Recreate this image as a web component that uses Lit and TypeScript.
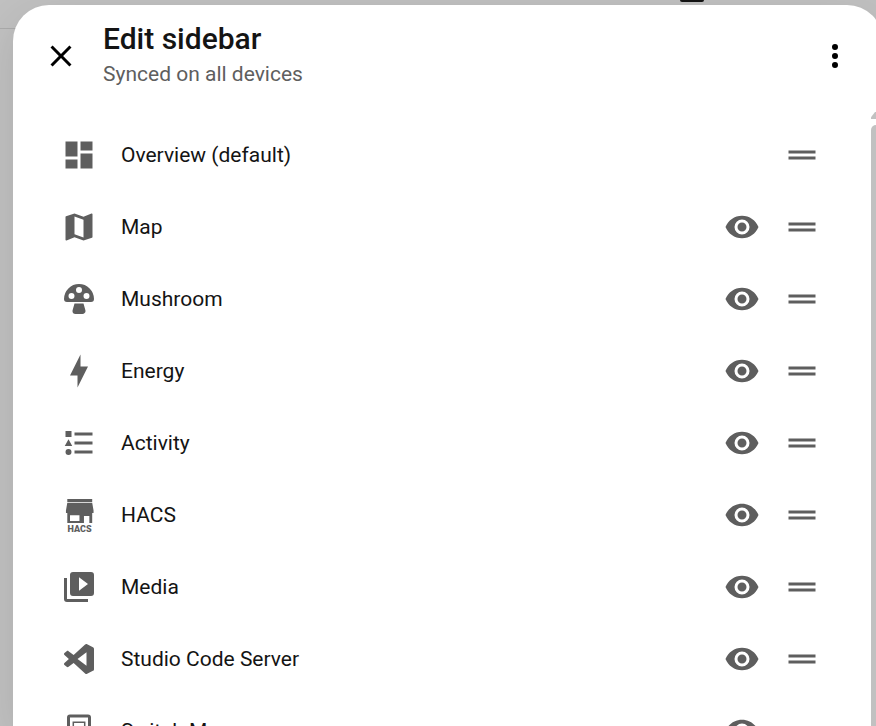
import { LitElement, html, svg, css, nothing } from "lit";
import { customElement, property, state } from "lit/decorators.js";

const paths: Record<string, string> = {
  close:
    "M19,6.41L17.59,5L12,10.59L6.41,5L5,6.41L10.59,12L5,17.59L6.41,19L12,13.41L17.59,19L19,17.59L13.41,12L19,6.41Z",
  dots:
    "M12,16A2,2 0 0,1 14,18A2,2 0 0,1 12,20A2,2 0 0,1 10,18A2,2 0 0,1 12,16M12,10A2,2 0 0,1 14,12A2,2 0 0,1 12,14A2,2 0 0,1 10,12A2,2 0 0,1 12,10M12,4A2,2 0 0,1 14,6A2,2 0 0,1 12,8A2,2 0 0,1 10,6A2,2 0 0,1 12,4Z",
  eye:
    "M12,9A3,3 0 0,0 9,12A3,3 0 0,0 12,15A3,3 0 0,0 15,12A3,3 0 0,0 12,9M12,17A5,5 0 0,1 7,12A5,5 0 0,1 12,7A5,5 0 0,1 17,12A5,5 0 0,1 12,17M12,4.5C7,4.5 2.73,7.61 1,12C2.73,16.39 7,19.5 12,19.5C17,19.5 21.27,16.39 23,12C21.27,7.61 17,4.5 12,4.5Z",
  drag: "M3,15V13H21V15H3M3,11V9H21V11H3Z",
  dashboard: "M13,3V9H21V3M13,21H21V11H13M3,21H11V15H3M3,13H11V3H3V13Z",
  map:
    "M15,19L9,16.89V5L15,7.11M20.5,3C20.44,3 20.39,3 20.34,3L15,5.1L9,3L3.36,4.9C3.15,4.97 3,5.15 3,5.38V20.5A0.5,0.5 0 0,0 3.5,21C3.55,21 3.61,21 3.66,20.97L9,18.9L15,21L20.64,19.1C20.85,19 21,18.85 21,18.62V3.5A0.5,0.5 0 0,0 20.5,3Z",
  mushroom:
    "M12,2A10,10 0 0,0 2,12A2,2 0 0,0 4,14H20A2,2 0 0,0 22,12A10,10 0 0,0 12,2M12,8A2,2 0 0,1 10,6A2,2 0 0,1 12,4A2,2 0 0,1 14,6A2,2 0 0,1 12,8M7,12A2,2 0 0,1 5,10A2,2 0 0,1 7,8A2,2 0 0,1 9,10A2,2 0 0,1 7,12M17,12A2,2 0 0,1 15,10A2,2 0 0,1 17,8A2,2 0 0,1 19,10A2,2 0 0,1 17,12M15,15L16.27,19.45L16.35,20C16.35,21.1 15.45,22 14.35,22H9.65A2,2 0 0,1 7.65,20L7.73,19.45L9,15H15Z",
  energy: "M11,15H6L13,1V9H18L11,23V15Z",
  activity:
    "M5,9.5L7.5,14H2.5L5,9.5M3,4H7V8H3V4M5,20A2,2 0 0,0 7,18A2,2 0 0,0 5,16A2,2 0 0,0 3,18A2,2 0 0,0 5,20M9,5V7H21V5H9M9,19H21V17H9V19M9,11V13H21V11H9Z",
  hacs:
    "M4.2,1.3H20.8V3.3H4.2ZM4.2,3.9H20.8L21.7,9V10.6H3.3V9ZM4.2,10.6H20.8V17.3H18.9V12.7H15.3V17.3H4.2ZM6,12.1V16H12.3V12.1Z",
  media:
    "M4,6H2V20A2,2 0 0,0 4,22H18V20H4V6M20,2H8A2,2 0 0,0 6,4V16A2,2 0 0,0 8,18H20A2,2 0 0,0 22,16V4A2,2 0 0,0 20,2M12,14.5V5.5L18,10L12,14.5Z",
  code:
    "M21.29,4.1L17.42,2.13C16.97,1.91 16.43,2 16.07,2.35L8.42,9.36L5.03,6.76C4.68,6.5 4.1,6.52 3.78,6.81L2.3,8.06C1.91,8.41 1.91,8.91 2.3,9.27L5.25,12L2.3,14.73C1.91,15.09 1.91,15.59 2.3,15.94L3.78,17.19C4.1,17.48 4.68,17.5 5.03,17.24L8.42,14.64L16.07,21.65C16.43,22 16.97,22.09 17.42,21.87L21.29,19.9C21.72,19.7 22,19.27 22,18.79V5.21C22,4.73 21.72,4.3 21.29,4.1M17,16.54L11.03,12L17,7.46V16.54Z",
  switch:
    "M6,1H18A2,2 0 0,1 20,3V21A2,2 0 0,1 18,23H6A2,2 0 0,1 4,21V3A2,2 0 0,1 6,1M6,3V21H18V3ZM7.7,5.6H16.3V18.4H7.7ZM8.7,6.6V17.4H15.3V6.6Z",
};

const icon = (name: string) => html`
  <svg class="icon" viewBox="0 0 24 24" aria-hidden="true">
    <path fill-rule="evenodd" d=${paths[name]}></path>
    ${name === "hacs"
      ? svg`<text class="mark" x="12.4" y="23.4" text-anchor="middle">HACS</text>`
      : nothing}
  </svg>
`;

const iconStyles = css`
  .icon {
    display: block;
    width: 36px;
    height: 36px;
    flex: none;
    fill: currentColor;
  }
  .mark {
    font: 900 6px Roboto, sans-serif;
  }
  button {
    display: grid;
    place-items: center;
    flex: none;
    padding: 0;
    border: 0;
    border-radius: 50%;
    background: none;
    color: inherit;
    cursor: pointer;
  }
`;

@customElement("sidebar-item")
class SidebarItem extends LitElement {
  @property() label = "";
  @property() glyph = "";
  @property({ type: Boolean }) fixed = false;

  static styles = [
    iconStyles,
    css`
      :host {
        display: flex;
        align-items: center;
        gap: 24px;
        height: 72px;
        padding: 0 48px;
        color: #5e5e5e;
      }
      .label {
        flex: 1;
        min-width: 0;
        font-size: 21px;
        line-height: 30px;
        color: #141414;
      }
      .drag {
        cursor: grab;
      }
    `,
  ];

  render() {
    return html`
      ${icon(this.glyph)}
      <span class="label">${this.label}</span>
      ${this.fixed
        ? nothing
        : html`<button aria-label="Hide ${this.label}">${icon("eye")}</button>`}
      <button class="drag" aria-label="Move ${this.label}">${icon("drag")}</button>
    `;
  }
}

@customElement("app-root")
class AppRoot extends LitElement {
  @state() items = [
    { label: "Overview (default)", glyph: "dashboard", fixed: true },
    { label: "Map", glyph: "map" },
    { label: "Mushroom", glyph: "mushroom" },
    { label: "Energy", glyph: "energy" },
    { label: "Activity", glyph: "activity" },
    { label: "HACS", glyph: "hacs" },
    { label: "Media", glyph: "media" },
    { label: "Studio Code Server", glyph: "code" },
    { label: "Switch Manager", glyph: "switch" },
  ];

  static styles = [
    iconStyles,
    css`
      :host {
        display: flex;
        position: relative;
        box-sizing: border-box;
        height: 100vh;
        padding: 5px 0 0 13px;
        overflow: hidden;
        background: #c0c0c0;
        font-family: Roboto, sans-serif;
      }
      .page-bar {
        position: absolute;
        inset: 0 0 auto 0;
        display: flex;
        justify-content: flex-end;
        height: 28px;
        padding-right: 172px;
        border-bottom: 1px solid #aaaaaa;
      }
      .tab {
        width: 24px;
        height: 2px;
        border-radius: 0 0 3px 3px;
        background: #141414;
      }
      .dialog {
        position: relative;
        display: flex;
        flex-direction: column;
        flex: 1;
        min-width: 0;
        margin-right: -7px;
        border-radius: 36px 36px 0 0;
        background: #ffffff;
        box-shadow: 0 12px 40px rgba(0, 0, 0, 0.1);
        overflow: hidden;
      }
      header {
        display: flex;
        align-items: center;
        gap: 6px;
        height: 102px;
        padding: 0 12px;
        color: #000000;
      }
      header button {
        width: 72px;
        height: 72px;
      }
      .titles {
        display: grid;
        gap: 2px;
        flex: 1;
      }
      h1,
      p {
        margin: 0;
      }
      h1 {
        font-size: 30px;
        font-weight: 500;
        line-height: 34px;
        color: #141414;
      }
      p {
        font-size: 21px;
        line-height: 32px;
        color: #5e5e5e;
      }
      .body {
        display: grid;
        grid-template-columns: 1fr 15px;
        flex: 1;
        min-height: 0;
      }
      .list {
        padding-top: 12px;
        overflow: hidden;
      }
      .scrollbar {
        display: flex;
        flex-direction: column;
        gap: 6px;
        padding: 5px 2px 0 3px;
      }
      .arrow {
        height: 7px;
        width: 10px;
        background: #c1c1c1;
        clip-path: polygon(40% 0, 60% 0, 100% 75%, 100% 100%, 0 100%, 0 75%);
      }
      .thumb {
        flex: 1;
        border-radius: 5px 5px 0 0;
        background: #c1c1c1;
      }
    `,
  ];

  render() {
    return html`
      <div class="page-bar"><div class="tab"></div></div>
      <section class="dialog" role="dialog" aria-labelledby="title">
        <header>
          <button aria-label="Close">${icon("close")}</button>
          <div class="titles">
            <h1 id="title">Edit sidebar</h1>
            <p>Synced on all devices</p>
          </div>
          <button aria-label="Menu">${icon("dots")}</button>
        </header>
        <div class="body">
          <div class="list">
            ${this.items.map(
              (i) => html`<sidebar-item
                .label=${i.label}
                .glyph=${i.glyph}
                .fixed=${i.fixed ?? false}
              ></sidebar-item>`
            )}
          </div>
          <div class="scrollbar">
            <div class="arrow"></div>
            <div class="thumb"></div>
          </div>
        </div>
      </section>
    `;
  }
}
